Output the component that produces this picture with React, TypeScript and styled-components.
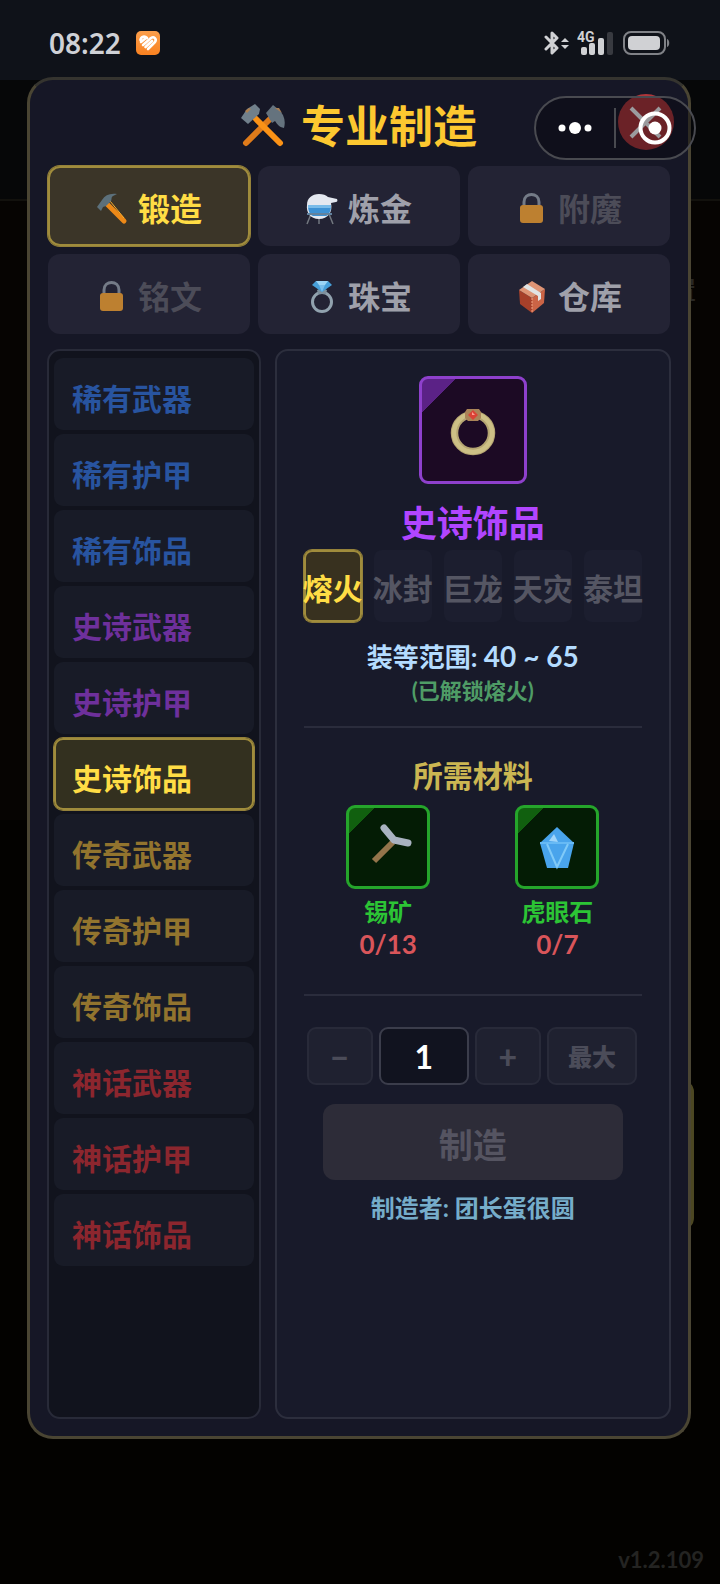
import React, { useState } from "react";
import styled, { createGlobalStyle, css } from "styled-components";

const GlobalStyle = createGlobalStyle`
  *, *::before, *::after { box-sizing: border-box; }
  body {
    margin: 0;
    background: #040300;
    font-family: Lato, "Noto Sans CJK SC", sans-serif;
    font-weight: 700;
  }
  button, input { font: inherit; color: inherit; margin: 0; padding: 0; }
  h1, h2, h3, p, ul, dl, dd { margin: 0; padding: 0; }
`;

const Screen = styled.div`
  position: relative;
  min-height: 100vh;
  display: flex;
  flex-direction: column;
  overflow: hidden;
  background: linear-gradient(#060708 0 199px, #12110d 199px 201px, #060402 201px 820px, #030200 820px);
`;

const StatusBar = styled.header`
  height: 80px;
  flex: none;
  display: flex;
  align-items: center;
  justify-content: space-between;
  padding: 6px 50px 0 49px;
  background: #0f1219;
`;

const StatusGroup = styled.div<{ $gap: number }>`
  display: flex;
  align-items: center;
  gap: ${(p) => p.$gap}px;
`;

const Clock = styled.time`
  font: 600 28px/32px "Noto Sans", sans-serif;
  color: #cfd1d6;
`;

const Backdrop = styled.div`
  position: absolute;
  inset: 0;
`;

const BackdropText = styled.span`
  position: absolute;
  top: 274px;
  right: 24px;
  font-size: 24px;
  line-height: 32px;
  color: #282724;
`;

const BackdropCard = styled.span`
  position: absolute;
  top: 1080px;
  right: 26px;
  width: 60px;
  height: 150px;
  border: 3px solid #4c4722;
  border-radius: 12px;
`;

const Modal = styled.main`
  position: relative;
  flex: 1;
  display: flex;
  flex-direction: column;
  margin: -3px 29px 0 27px;
  padding: 14px 18px 17px;
  border: 3px solid #4a4533;
  border-top-color: #35342f;
  border-radius: 26px;
  background: #161726;
`;

const Title = styled.h1`
  display: flex;
  align-items: center;
  justify-content: center;
  gap: 16px;
  height: 64px;
  margin-bottom: 8px;
  font-size: 44px;
  line-height: 64px;
  color: #fdc830;
`;

const CloseButton = styled.button`
  position: absolute;
  top: 14px;
  right: 14px;
  width: 56px;
  height: 56px;
  border: 0;
  border-radius: 50%;
  background: #b0363a;
`;

const Capsule = styled.div`
  position: absolute;
  top: 96px;
  right: 24px;
  width: 162px;
  height: 64px;
  display: flex;
  align-items: center;
  border: 2px solid #494a50;
  border-radius: 32px;
  background: rgba(5, 5, 12, 0.4);
`;

const CapsuleButton = styled.button`
  flex: 1;
  height: 100%;
  display: grid;
  place-items: center;
  border: 0;
  background: none;
`;

const CapsuleRule = styled.span`
  width: 2px;
  height: 40px;
  background: #494a50;
`;

const selected = css`
  color: #ffdd45;
  box-shadow: inset 0 0 0 2px #a08c3c, 0 0 0 1px #94813a;
`;

const Tabs = styled.nav`
  display: grid;
  grid-template-columns: repeat(3, 1fr);
  gap: 8px;
  margin-bottom: 15px;
`;

const Tab = styled.button<{ $on: boolean }>`
  height: 80px;
  display: flex;
  align-items: center;
  justify-content: center;
  gap: 10px;
  padding-top: 6px;
  border: 0;
  border-radius: 12px;
  background: ${(p) => (p.$on ? "#3b3528" : "#232334")};
  color: #9fa0aa;
  font-size: 32px;
  line-height: 40px;
  &:disabled { color: #4c4c58; }
  ${(p) => p.$on && selected}
`;

const Columns = styled.div`
  flex: 1;
  display: grid;
  grid-template-columns: minmax(0, 35fr) minmax(0, 65fr);
  gap: 14px;
  margin: 0 -1px;
`;

const ListPanel = styled.ul`
  display: flex;
  flex-direction: column;
  gap: 4px;
  padding: 7px 5px;
  list-style: none;
  border: 2px solid #282a38;
  border-radius: 13px;
  background: #11131d;
`;

const tones = { rare: "#2854a0", epic: "#6e309c", legend: "#92742e", myth: "#8c262e" };
type Tone = keyof typeof tones;

const ListItem = styled.button<{ $tone: Tone; $on: boolean }>`
  display: block;
  width: 100%;
  height: 72px;
  padding: 8px 18px 0;
  border: 0;
  border-radius: 9px;
  background: ${(p) => (p.$on ? "#33301f" : "#181b27")};
  color: ${(p) => tones[p.$tone]};
  font-size: 30px;
  line-height: 40px;
  text-align: left;
  ${(p) => p.$on && selected}
`;

const Detail = styled.section`
  display: flex;
  flex-direction: column;
  align-items: center;
  padding: 25px 27px;
  border: 2px solid #2c2e3d;
  border-radius: 13px;
  background: #181a2a;
`;

const Slot = styled.div<{ $size: number; $line: string; $fill: string; $corner: string; $cut: number }>`
  width: ${(p) => p.$size}px;
  height: ${(p) => p.$size}px;
  display: grid;
  place-items: center;
  border: 3px solid ${(p) => p.$line};
  border-radius: 9px;
  background: linear-gradient(135deg, ${(p) => p.$corner} ${(p) => p.$cut}px, ${(p) => p.$fill} ${(p) => p.$cut}px);
`;

const ItemName = styled.h2`
  margin-top: 15px;
  font-size: 36px;
  line-height: 48px;
  color: #b145ff;
`;

const Seasons = styled.div`
  align-self: stretch;
  display: grid;
  grid-template-columns: repeat(5, minmax(0, 1fr));
  gap: 12px;
  margin-top: 3px;
`;

const Season = styled.button<{ $on: boolean }>`
  height: 72px;
  display: flex;
  justify-content: center;
  align-items: center;
  padding-top: 4px;
  border: 0;
  border-radius: 8px;
  background: ${(p) => (p.$on ? "#38311f" : "#1c1e2f")};
  color: #555663;
  font-size: 30px;
  line-height: 40px;
  white-space: nowrap;
  ${(p) => p.$on && selected}
`;

const RangeText = styled.p`
  margin-top: 18px;
  font-size: 26px;
  line-height: 32px;
  color: #b4dcff;
`;

const RangeValue = styled.span`
  font-size: 28px;
`;

const UnlockText = styled.p`
  margin-top: 2px;
  font-size: 22px;
  line-height: 32px;
  color: #4f9c66;
`;

const Divider = styled.hr`
  align-self: stretch;
  flex: none;
  height: 2px;
  margin: 19px 0 0;
  border: 0;
  background: #2a2c3c;
`;

const MaterialsTitle = styled.h3`
  margin-top: 27px;
  font-size: 30px;
  line-height: 40px;
  color: #cbb652;
`;

const Materials = styled.div`
  align-self: stretch;
  display: grid;
  grid-template-columns: 1fr 1fr;
  margin: 10px 0 15px;
`;

const Material = styled.div`
  display: flex;
  flex-direction: column;
  align-items: center;
`;

const MaterialName = styled.p`
  margin-top: 7px;
  font-size: 24px;
  line-height: 32px;
  color: #2cc435;
`;

const MaterialCount = styled.p`
  font-size: 26px;
  line-height: 32px;
  color: #d9555a;
`;

const Stepper = styled.div`
  align-self: stretch;
  display: grid;
  grid-template-columns: 66fr 90fr 66fr 90fr;
  gap: 6px;
  margin: 31px 5px 0 3px;
`;

const StepButton = styled.button<{ $size: number }>`
  height: 58px;
  padding-top: 2px;
  border: 2px solid #282a39;
  border-radius: 9px;
  background: #1f2130;
  color: #4b4c59;
  font-size: ${(p) => p.$size}px;
  font-weight: 900;
  line-height: 32px;
`;

const QuantityInput = styled.input`
  width: 100%;
  height: 58px;
  border: 2px solid #3b3d4b;
  border-radius: 9px;
  background: #11131f;
  color: #fff;
  font-size: 32px;
  text-align: center;
  outline: none;
`;

const CraftButton = styled.button`
  width: 300px;
  max-width: 100%;
  height: 76px;
  margin-top: 19px;
  padding-top: 6px;
  border: 0;
  border-radius: 12px;
  background: #2d2c38;
  color: #555461;
  font-size: 34px;
  line-height: 40px;
`;

const Maker = styled.p`
  margin-top: 12px;
  font-size: 24px;
  line-height: 32px;
  color: #76adca;
`;

const Footer = styled.footer`
  position: relative;
  height: 145px;
  flex: none;
  display: flex;
  align-items: flex-end;
  justify-content: flex-end;
  padding: 0 16px 8px;
  font-size: 22px;
  line-height: 32px;
  color: #242422;
`;

const HeartBadge = () => (
  <svg width="24" height="24" viewBox="0 0 24 24">
    <defs>
      <linearGradient id="badge" x1="0" y1="0" x2="0" y2="1">
        <stop offset="0" stopColor="#fb9f4c" />
        <stop offset="1" stopColor="#f98120" />
      </linearGradient>
    </defs>
    <rect width="24" height="24" rx="5" fill="url(#badge)" />
    <g stroke="#fff" strokeWidth="2.600" strokeLinecap="round" strokeLinejoin="round" fill="none">
      <path d="M5 11L10 7" />
      <path d="M4.500 9C5 5 9 5 11 7" />
      <path d="M7 14L15 7C18 5 21 8 19 11L12 18" />
      <path d="M9.500 16L16 10" />
    </g>
  </svg>
);

const Bluetooth = () => (
  <svg width="25" height="26" viewBox="0 0 25 26" fill="none">
    <path d="M2 7l11 11-5 5V3l5 5L2 19" stroke="#d0d1d4" strokeWidth="3" strokeLinejoin="round" strokeLinecap="round" />
    <path d="M17 12l4-4 4 4zM17 15l4 4 4-4z" fill="#d0d1d4" />
  </svg>
);

const Signal = () => (
  <svg width="38" height="26" viewBox="0 0 38 26" fill="#d0d1d4">
    <text x="0" y="12" fontSize="14" fontWeight="700" fontFamily="Roboto, sans-serif">4G</text>
    <rect x="4" y="17" width="6" height="8" rx="2" />
    <rect x="12" y="13" width="6" height="12" rx="2" />
    <rect x="21" y="8" width="6" height="17" rx="2" />
    <rect x="30" y="2" width="6" height="23" rx="2" fill="#383a40" />
  </svg>
);

const Battery = () => (
  <svg width="47" height="24" viewBox="0 0 47 24">
    <rect x="1" y="1" width="41" height="22" rx="7" fill="none" stroke="#808287" strokeWidth="2" />
    <rect x="5" y="5" width="32" height="14" rx="4" fill="#d0d1d4" />
    <path d="M44 8c3 1 3 7 0 8z" fill="#808287" />
  </svg>
);

const CrossedHammers = () => (
  <svg width="44" height="44" viewBox="0 0 44 44">
    <path d="M5 39L29 15" stroke="#df7b1a" strokeWidth="6" strokeLinecap="round" />
    <path d="M25 9l7-8 5 4c6 5 8 12 6 19-5-1-7-4-9-7l-3 2z" fill="#65737e" />
    <path d="M34 4l4 0 3 5z" fill="#a77f55" />
    <path d="M39 39L15 15" stroke="#fb9216" strokeWidth="6" strokeLinecap="round" />
    <path d="M0 14l6-9 8-5 5 5-1 5-11 10z" fill="#71808b" />
    <path d="M4 7l4-3 2 1-4 4z" fill="#ad8050" />
  </svg>
);

const Hammer = () => (
  <svg width="32" height="32" viewBox="0 0 32 32">
    <path d="M11 11L28 28" stroke="#ed8918" strokeWidth="5" strokeLinecap="round" />
    <path d="M14 8l14 17" stroke="#ffb02d" strokeWidth="1" />
    <path d="M1 14l5-7C9 2 14 0 21 1l-4 2c-2 1-1 3-2 5l-5 5-3 1-2 4z" fill="#5c707b" />
  </svg>
);

const Alembic = () => (
  <svg width="32" height="32" viewBox="0 0 32 32">
    <path d="M5 21L1 31M13 24v7M23 21l4 10" stroke="#72777f" strokeWidth="1.500" />
    <path d="M1 12C1 5 6 1 13 1c4 0 7 1 9 3l9 2c1 2 0 3-1 3l-5 1c2 9-3 16-12 16S0 19 1 12z" fill="#e4e8f0" />
    <path d="M2 13h23c0 5-2 9-5 10H7c-3-1-5-5-5-10z" fill="#3d91d4" />
    <path d="M2 12h23v3H2z" fill="#79bbe9" />
    <path d="M1 21h25" stroke="#62829e" strokeWidth="2" />
  </svg>
);

const Lock = () => (
  <svg width="32" height="32" viewBox="0 0 32 32">
    <path d="M8 14V9c0-10 15-10 15 0v5" fill="none" stroke="#747b87" strokeWidth="3" />
    <rect x="4" y="12" width="23" height="18" rx="3" fill="#bd8030" />
  </svg>
);

const DiamondRing = () => (
  <svg width="32" height="34" viewBox="0 0 32 34">
    <circle cx="16" cy="22" r="9.500" fill="none" stroke="#91a2ae" strokeWidth="3" />
    <path d="M11 10l5-2 5 2-1 4h-8z" fill="#7d909d" />
    <path d="M10 1h12l4 4-10 7L6 5z" fill="#479fd9" />
    <path d="M10 1h12l-3 4h-6z" fill="#9bd4f4" />
    <path d="M13 5h6l-3 7z" fill="#78bdea" />
  </svg>
);

const Parcel = () => (
  <svg width="32" height="34" viewBox="0 0 32 34">
    <path d="M3 10l13 8v15L4 24z" fill="#a6402a" />
    <path d="M29 9l-13 9v15l12-10z" fill="#cb6446" />
    <path d="M3 10L16 1l13 8-13 9z" fill="#de9475" />
    <path d="M7 7l4-3 14 9v6l-3 2v-5z" fill="#e1e4e4" />
    <path d="M16 18v14" stroke="#f0a382" strokeWidth="1" strokeDasharray="2 1" />
  </svg>
);

const RubyRing = () => (
  <svg width="102" height="102" viewBox="0 0 102 102">
    <circle cx="51" cy="54" r="18.500" fill="none" stroke="#b5a572" strokeWidth="7.500" />
    <circle cx="51" cy="54" r="19" fill="none" stroke="#cdc086" strokeWidth="4.500" />
    <path d="M45 30h12l2 3v6l-3 3H46l-3-3v-6z" fill="#aa8458" />
    <path d="M51 31l5 5-5 5-5-5z" fill="#d94336" />
    <path d="M50 33l3 3h-3z" fill="#ff9d90" />
  </svg>
);

const Pickaxe = () => (
  <svg width="78" height="78" viewBox="0 0 78 78">
    <path d="M25 53L44 34" stroke="#94744b" strokeWidth="6" />
    <path d="M35 20l10 12 14 3" fill="none" stroke="#a9b2c1" strokeWidth="7" strokeLinecap="round" strokeLinejoin="round" />
  </svg>
);

const Gem = () => (
  <svg width="78" height="78" viewBox="0 0 78 78">
    <path d="M39 19l17 16-6 25H29L22 35z" fill="#49a4ec" />
    <path d="M22 35h34" stroke="#67baf5" strokeWidth="2" />
    <path d="M29 36l10 23 11-23" fill="none" stroke="#80caf8" strokeWidth="2" />
    <path d="M36 26l4 8-9-1z" fill="#a0d5fa" />
  </svg>
);

const tabs = [
  { label: "锻造", icon: <Hammer /> },
  { label: "炼金", icon: <Alembic /> },
  { label: "附魔", icon: <Lock />, locked: true },
  { label: "铭文", icon: <Lock />, locked: true },
  { label: "珠宝", icon: <DiamondRing /> },
  { label: "仓库", icon: <Parcel /> },
];

const groups: { name: string; tone: Tone }[] = [
  { name: "稀有", tone: "rare" },
  { name: "史诗", tone: "epic" },
  { name: "传奇", tone: "legend" },
  { name: "神话", tone: "myth" },
];
const recipes = groups.flatMap((g) =>
  ["武器", "护甲", "饰品"].map((kind) => ({ label: g.name + kind, tone: g.tone }))
);

const seasons = ["熔火", "冰封", "巨龙", "天灾", "泰坦"];

const materials = [
  { name: "锡矿", count: "0/13", icon: <Pickaxe /> },
  { name: "虎眼石", count: "0/7", icon: <Gem /> },
];

export default function App() {
  const [tab, setTab] = useState("锻造");
  const [recipe, setRecipe] = useState("史诗饰品");
  const [quantity, setQuantity] = useState("1");

  return (
    <>
      <GlobalStyle />
      <Screen>
        <Backdrop aria-hidden="true">
          <BackdropText>置</BackdropText>
          <BackdropCard />
        </Backdrop>
        <StatusBar>
          <StatusGroup $gap={15}>
            <Clock>08:22</Clock>
            <HeartBadge />
          </StatusGroup>
          <StatusGroup $gap={8}>
            <Bluetooth />
            <Signal />
            <Battery />
          </StatusGroup>
        </StatusBar>

        <Modal>
          <Title>
            <CrossedHammers />
            专业制造
          </Title>
          <CloseButton aria-label="关闭">
            <svg width="56" height="56" viewBox="0 0 56 56">
              <path d="M13 14l29 29M42 14L13 43" stroke="#fff" strokeWidth="4" />
            </svg>
          </CloseButton>

          <Tabs>
            {tabs.map((t) => (
              <Tab key={t.label} $on={t.label === tab} disabled={t.locked} onClick={() => setTab(t.label)}>
                {t.icon}
                {t.label}
              </Tab>
            ))}
          </Tabs>

          <Columns>
            <ListPanel>
              {recipes.map((r) => (
                <li key={r.label}>
                  <ListItem $tone={r.tone} $on={r.label === recipe} onClick={() => setRecipe(r.label)}>
                    {r.label}
                  </ListItem>
                </li>
              ))}
            </ListPanel>

            <Detail>
              <Slot $size={108} $line="#8e40cc" $fill="#1c0a24" $corner="#5b2286" $cut={24}>
                <RubyRing />
              </Slot>
              <ItemName>史诗饰品</ItemName>
              <Seasons>
                {seasons.map((s, i) => (
                  <Season key={s} $on={i === 0} disabled={i > 0}>
                    {s}
                  </Season>
                ))}
              </Seasons>
              <RangeText>
                装等范围: <RangeValue>40 ~ 65</RangeValue>
              </RangeText>
              <UnlockText>(已解锁熔火)</UnlockText>
              <Divider />
              <MaterialsTitle>所需材料</MaterialsTitle>
              <Materials>
                {materials.map((m) => (
                  <Material key={m.name}>
                    <Slot $size={84} $line="#25a52b" $fill="#041c05" $corner="#11600f" $cut={18}>
                      {m.icon}
                    </Slot>
                    <MaterialName>{m.name}</MaterialName>
                    <MaterialCount>{m.count}</MaterialCount>
                  </Material>
                ))}
              </Materials>
              <Divider />
              <Stepper>
                <StepButton $size={32} disabled aria-label="减少">−</StepButton>
                <QuantityInput aria-label="数量" value={quantity} onChange={(e) => setQuantity(e.target.value)} />
                <StepButton $size={32} disabled aria-label="增加">+</StepButton>
                <StepButton $size={24} disabled>最大</StepButton>
              </Stepper>
              <CraftButton disabled>制造</CraftButton>
              <Maker>制造者: 团长蛋很圆</Maker>
            </Detail>
          </Columns>
        </Modal>

        <Footer>v1.2.109</Footer>

        <Capsule>
          <CapsuleButton aria-label="更多">
            <svg width="36" height="14" viewBox="0 0 36 14" fill="#fff">
              <circle cx="5" cy="7" r="3.500" />
              <circle cx="18" cy="7" r="6" />
              <circle cx="31" cy="7" r="3.500" />
            </svg>
          </CapsuleButton>
          <CapsuleRule />
          <CapsuleButton aria-label="退出">
            <svg width="34" height="34" viewBox="0 0 34 34">
              <circle cx="17" cy="17" r="14.500" fill="none" stroke="#fff" strokeWidth="4" />
              <circle cx="17" cy="17" r="6.500" fill="#fff" />
            </svg>
          </CapsuleButton>
        </Capsule>
      </Screen>
    </>
  );
}
